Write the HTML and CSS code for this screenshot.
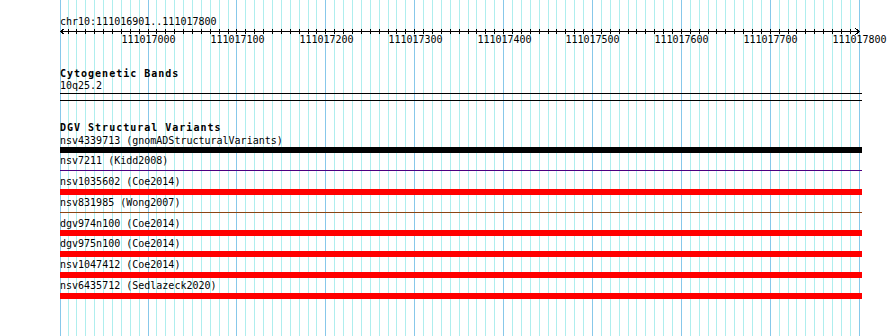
FILE: index.html
```html
<!DOCTYPE html>
<html>
<head>
<meta charset="utf-8">
<title>DGV Structural Variants</title>
<link rel="stylesheet" href="styles.css">
</head>
<body>
<div class="page">
  <svg class="grid" id="grid" width="890" height="336" xmlns="http://www.w3.org/2000/svg"></svg>
  <div class="view">
    <section class="ruler">
      <div class="locus">chr10:111016901..111017800</div>
      <svg class="scale" id="scale" width="802" height="7" xmlns="http://www.w3.org/2000/svg">
        <line class="axis" x1="0" y1="3.5" x2="800" y2="3.5"/>
        <polyline class="axis" points="4.5,0.5 0.5,3.5 4.5,6.5"/>
        <polyline class="axis" points="795.5,0.5 799.5,3.5 795.5,6.5"/>
      </svg>
      <div class="scale-labels">
        <span class="scale-label" style="left:88.5px">111017000</span>
        <span class="scale-label" style="left:177.5px">111017100</span>
        <span class="scale-label" style="left:266.5px">111017200</span>
        <span class="scale-label" style="left:355.5px">111017300</span>
        <span class="scale-label" style="left:444.5px">111017400</span>
        <span class="scale-label" style="left:532.5px">111017500</span>
        <span class="scale-label" style="left:621.5px">111017600</span>
        <span class="scale-label" style="left:710.5px">111017700</span>
        <span class="scale-label" style="left:799.5px">111017800</span>
      </div>
    </section>

    <section class="track track-cyto">
      <h2 class="track-title">Cytogenetic Bands</h2>
      <div class="feature-label">10q25.2</div>
      <div class="band"></div>
    </section>

    <section class="track track-dgv">
      <h2 class="track-title">DGV Structural Variants</h2>
      <div class="row">
        <div class="feature-label">nsv4339713 (gnomADStructuralVariants)</div>
        <div class="bar bar-black"></div>
      </div>
      <div class="row">
        <div class="feature-label">nsv7211 (Kidd2008)</div>
        <div class="bar bar-thin bar-purple"></div>
      </div>
      <div class="row">
        <div class="feature-label">nsv1035602 (Coe2014)</div>
        <div class="bar bar-red"></div>
      </div>
      <div class="row">
        <div class="feature-label">nsv831985 (Wong2007)</div>
        <div class="bar bar-thin bar-brown"></div>
      </div>
      <div class="row">
        <div class="feature-label">dgv974n100 (Coe2014)</div>
        <div class="bar bar-red"></div>
      </div>
      <div class="row">
        <div class="feature-label">dgv975n100 (Coe2014)</div>
        <div class="bar bar-red"></div>
      </div>
      <div class="row">
        <div class="feature-label">nsv1047412 (Coe2014)</div>
        <div class="bar bar-red"></div>
      </div>
      <div class="row">
        <div class="feature-label">nsv6435712 (Sedlazeck2020)</div>
        <div class="bar bar-red"></div>
      </div>
    </section>
  </div>
</div>
<script src="script.js"></script>
</body>
</html>
```

FILE: styles.css
```css
html, body {
  margin: 0;
  padding: 0;
  background: #ffffff;
}

body {
  font-family: "DejaVu Sans Mono", "Liberation Mono", monospace;
  font-size: 10px;
  line-height: 12px;
  color: #000000;
}

.page {
  position: relative;
  width: 890px;
  height: 336px;
  overflow: hidden;
}

.grid {
  position: absolute;
  left: 0;
  top: 0;
}

.grid line {
  stroke-width: 1;
  shape-rendering: crispEdges;
}

.grid .minor {
  stroke: #afeeee;
}

.grid .major {
  stroke: #87c8ea;
}

.view {
  position: relative;
  margin-left: 60px;
  width: 802px;
}

.ruler {
  padding-top: 16px;
}

.locus {
  height: 12px;
  white-space: nowrap;
}

.scale {
  display: block;
  overflow: visible;
}

.scale .axis {
  stroke: #000000;
  stroke-width: 1;
  fill: none;
  shape-rendering: crispEdges;
}

.scale .tick {
  stroke: #000000;
  stroke-width: 1;
  shape-rendering: crispEdges;
}

.scale-labels {
  position: relative;
  height: 12px;
  margin-top: -1px;
}

.scale-label {
  position: absolute;
  top: 0;
  transform: translateX(-50%);
  white-space: nowrap;
}

.track-title {
  margin: 0;
  font-size: 10px;
  font-weight: bold;
  letter-spacing: 1px;
  line-height: 12px;
  white-space: nowrap;
}

.feature-label {
  height: 12px;
  white-space: nowrap;
}

.track-cyto {
  margin-top: 22px;
}

.band {
  margin-top: 1px;
  height: 6px;
  border-top: 1px solid #000000;
  border-bottom: 1px solid #000000;
}

.track-dgv {
  margin-top: 20.5px;
}

.track-dgv .track-title {
  margin-bottom: 1px;
}

.row {
  height: 20.8px;
}

.bar {
  margin-top: 0.5px;
  height: 6px;
}

.bar-thin {
  margin-top: 3px;
  height: 1px;
}

.bar-black {
  background: #000000;
}

.bar-red {
  background: #ff0000;
}

.bar-purple {
  background: #4b0082;
}

.bar-brown {
  background: #8b4513;
}
```

FILE: script.js
```js
(function () {
  var start = 111016901;
  var end = 111017800;
  var x0 = 60;
  var pxPerBp = 800 / (end - start + 1);
  var ns = "http://www.w3.org/2000/svg";
  var grid = document.getElementById("grid");
  var scale = document.getElementById("scale");

  function addLine(svg, x1, y1, x2, y2, cls) {
    var l = document.createElementNS(ns, "line");
    l.setAttribute("x1", x1);
    l.setAttribute("y1", y1);
    l.setAttribute("x2", x2);
    l.setAttribute("y2", y2);
    l.setAttribute("class", cls);
    svg.appendChild(l);
  }

  addLine(grid, x0 + 0.5, 0, x0 + 0.5, 336, "major");

  for (var p = 111016910; p <= end; p += 10) {
    var x = Math.floor(x0 + (p - start) * pxPerBp);
    addLine(grid, x + 0.5, 0, x + 0.5, 336, p % 100 === 0 ? "major" : "minor");
    if (p < end) {
      addLine(scale, x - x0 + 0.5, 1, x - x0 + 0.5, 6, "tick");
    }
  }
})();
```
